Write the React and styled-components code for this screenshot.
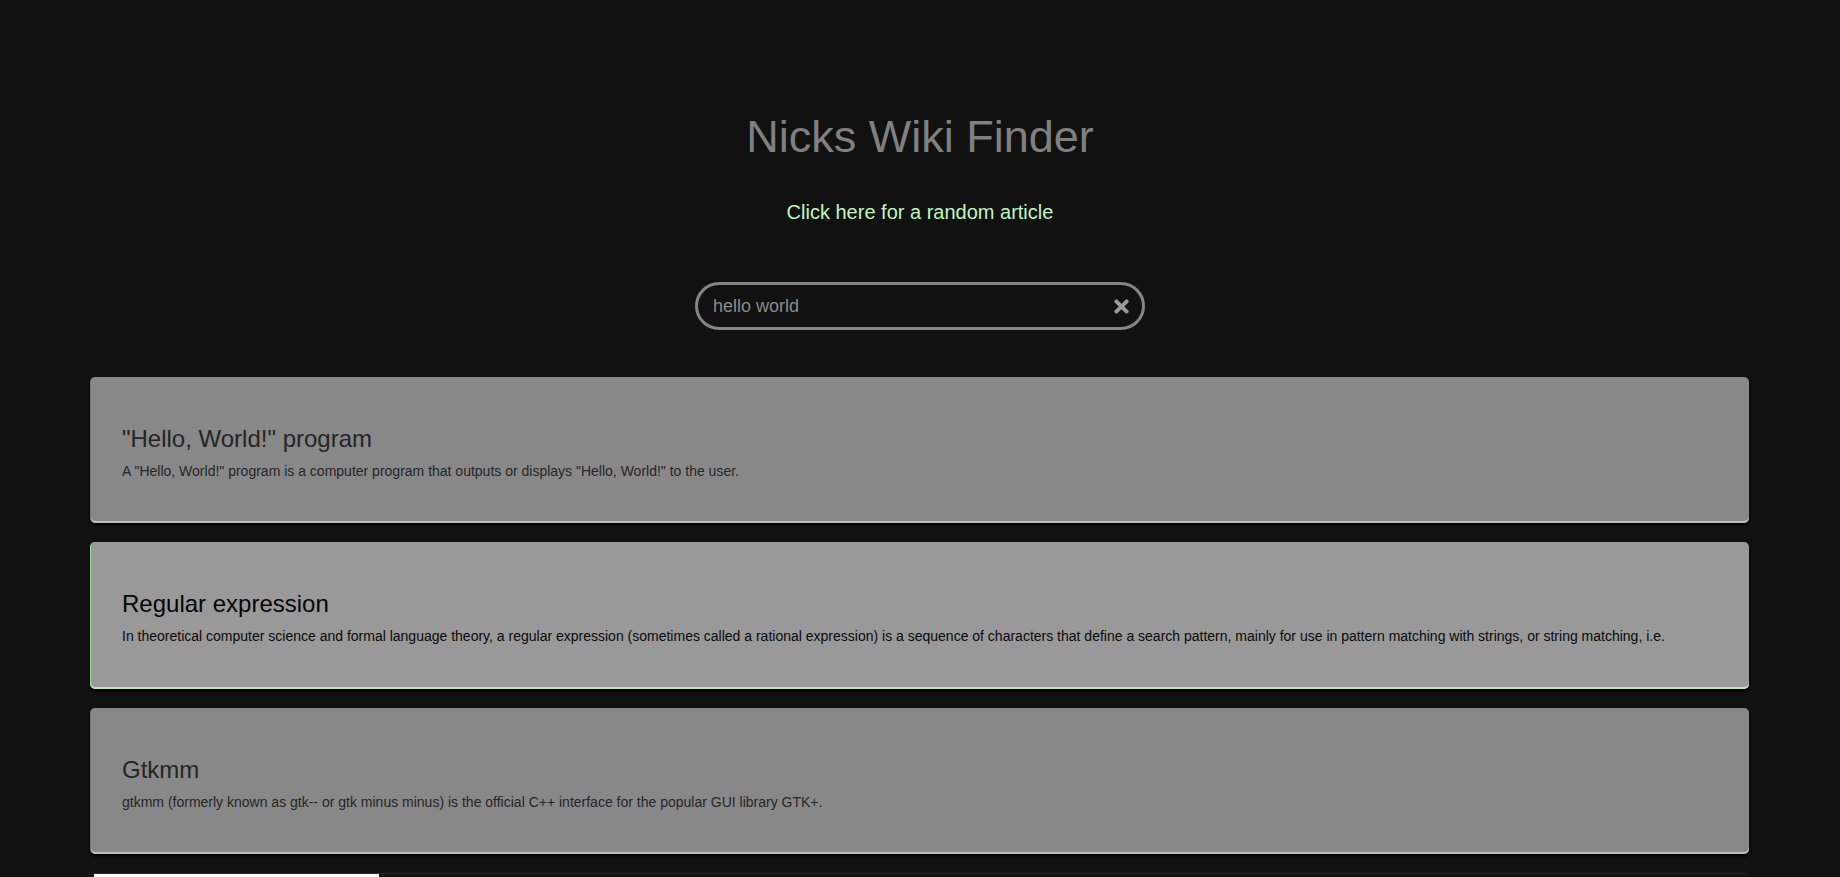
import React, { useState } from "react";
import styled, { createGlobalStyle } from "styled-components";
import { FaTimes } from "react-icons/fa";

const results = [
  {
    title: '"Hello, World!" program',
    text: 'A "Hello, World!" program is a computer program that outputs or displays "Hello, World!" to the user.',
  },
  {
    title: "Regular expression",
    text: "In theoretical computer science and formal language theory, a regular expression (sometimes called a rational expression) is a sequence of characters that define a search pattern, mainly for use in pattern matching with strings, or string matching, i.e.",
  },
  {
    title: "Gtkmm",
    text: "gtkmm (formerly known as gtk-- or gtk minus minus) is the official C++ interface for the popular GUI library GTK+.",
  },
];

const App = () => {
  const [query, setQuery] = useState("hello world");

  return (
    <>
      <GlobalStyle />
      <Page>
        <Header>
          <Title>Nicks Wiki Finder</Title>
          <RandomLink href="#">Click here for a random article</RandomLink>
          <SearchBox>
            <SearchInput
              value={query}
              onChange={(e) => setQuery(e.target.value)}
            />
            <ClearBtn onClick={() => setQuery("")}>
              <FaTimes />
            </ClearBtn>
          </SearchBox>
        </Header>
        <Results>
          {results.map((r, i) => (
            <Card key={r.title} $active={i === 1}>
              <CardTitle $active={i === 1}>{r.title}</CardTitle>
              <CardText $active={i === 1}>{r.text}</CardText>
            </Card>
          ))}
          <Pending>
            <Progress />
          </Pending>
        </Results>
      </Page>
    </>
  );
};

const GlobalStyle = createGlobalStyle`
  html, body {
    margin: 0;
    padding: 0;
    background-color: #111;
    font-family: "Liberation Sans", Arial, sans-serif;
  }
`;

const Page = styled.div`
  min-height: 100vh;
  background-color: #111;
  overflow: hidden;
`;

const Header = styled.header`
  display: flex;
  flex-direction: column;
  align-items: center;
  padding-top: 111px;
`;

const Title = styled.h1`
  margin: 0;
  font-size: 45px;
  line-height: 51px;
  font-weight: 400;
  color: #808080;
`;

const RandomLink = styled.a`
  margin-top: 39px;
  font-size: 20px;
  line-height: 23px;
  color: #c2f5c0;
  text-decoration: none;
`;

const SearchBox = styled.div`
  margin-top: 58px;
  box-sizing: border-box;
  width: 450px;
  height: 48px;
  border: 3px solid #858585;
  border-radius: 24px;
  display: flex;
  align-items: center;
  padding: 0 10px 0 15px;
`;

const SearchInput = styled.input`
  flex: 1;
  background: transparent;
  border: none;
  outline: none;
  font-family: "Liberation Sans", Arial, sans-serif;
  font-size: 18px;
  color: #8a8a8a;
  padding: 0;
`;

const ClearBtn = styled.button`
  background: none;
  border: none;
  padding: 0;
  display: flex;
  align-items: center;
  color: #9a9a9a;
  font-size: 21px;
  cursor: pointer;
`;

const Results = styled.div`
  margin: 47px 91px 0 90px;
  display: flex;
  flex-direction: column;
  gap: 19px;
`;

const Card = styled.div`
  box-sizing: border-box;
  height: ${(p) => (p.$active ? "147px" : "146px")};
  padding: 48px 31px 44px;
  border-radius: 5px;
  background-color: ${(p) => (p.$active ? "#999" : "#888")};
  border-left: 1px solid ${(p) => (p.$active ? "#9fd89f" : "#777")};
  box-shadow: inset 0 -2px 0 ${(p) => (p.$active ? "#b9e6b4" : "#bdbdbd")},
    0 2px 3px rgba(0, 0, 0, 0.9);
  cursor: pointer;
`;

const CardTitle = styled.h2`
  margin: 0 0 10px;
  font-size: 24px;
  line-height: 28px;
  font-weight: 400;
  color: ${(p) => (p.$active ? "#050505" : "#252525")};
`;

const CardText = styled.p`
  margin: 0;
  font-size: 14px;
  line-height: 16px;
  color: ${(p) => (p.$active ? "#0a0a0a" : "#262626")};
`;

const Pending = styled.div`
  height: 146px;
  border-radius: 5px;
  border-top: 1px solid #2a2a2a;
`;

const Progress = styled.div`
  width: 17.2%;
  height: 3px;
  margin-left: 4px;
  background-color: #fff;
`;

export default App;
